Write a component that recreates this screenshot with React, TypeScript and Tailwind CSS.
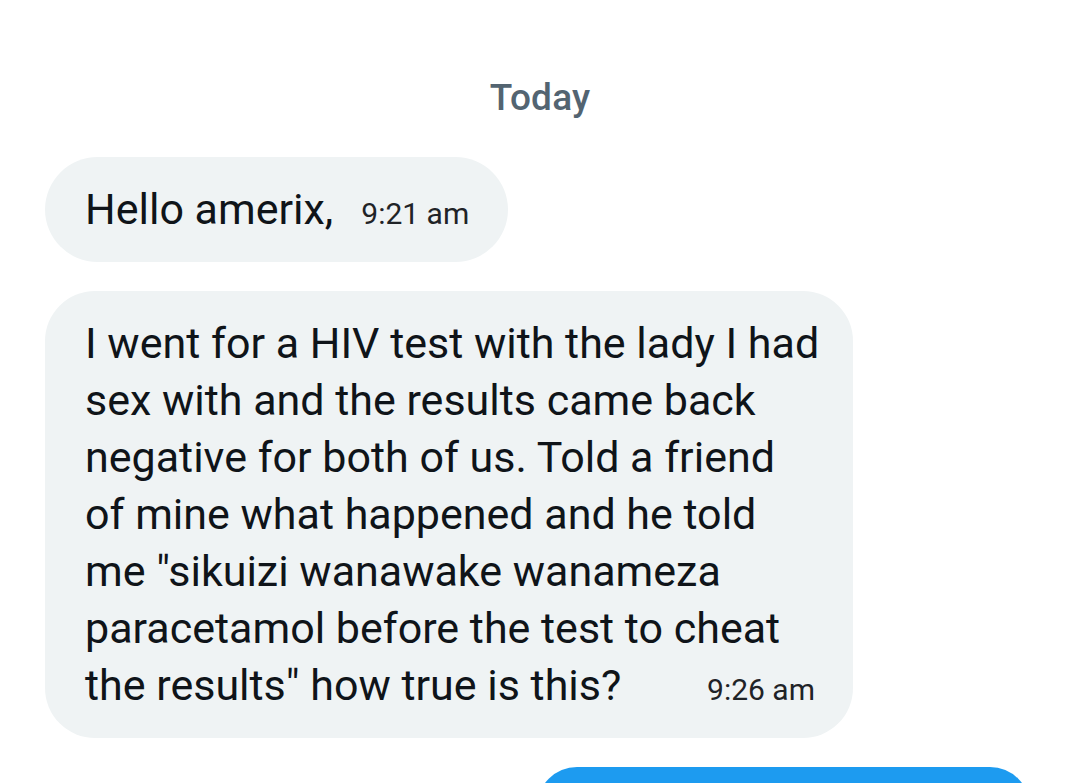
export default function App() {
  const lines = [
    "I went for a HIV test with the lady I had",
    "sex with and the results came back",
    "negative for both of us. Told a friend",
    "of mine what happened and he told",
    'me "sikuizi wanawake wanameza',
    "paracetamol before the test to cheat",
  ];

  return (
    <div
      className="w-[1080px] h-[783px] overflow-hidden bg-white text-[#0f1419]"
      style={{ fontFamily: "Roboto, 'Noto Sans', sans-serif" }}
    >
      {/* date divider */}
      <div className="pt-[76px] flex justify-center">
        <span className="text-[37px] leading-[44px] font-medium text-[#536471] tracking-[0.2px]">Today</span>
      </div>

      <div className="mt-[37px] pl-[45px] flex flex-col items-start gap-[29px]">
        {/* short bubble */}
        <div className="h-[105px] rounded-full bg-[#eff3f4] pl-[40px] pr-[39px] flex items-center">
          <span className="text-[43px] leading-[57px]">Hello amerix,</span>
          <span className="ml-[28px] mt-[8px] text-[30px] text-[#1f2327]">9:21 am</span>
        </div>

        {/* long bubble */}
        <div className="w-[808px] rounded-[50px] bg-[#eff3f4] pl-[40px] pr-[38px] pt-[24px] pb-[20px]">
          <div className="text-[43px] leading-[57px] whitespace-nowrap">
            {lines.map((l) => (
              <div key={l}>{l}</div>
            ))}
            <div className="flex items-baseline justify-between">
              <span>the results" how true is this?</span>
              <span className="text-[30px] text-[#1f2327]">9:26 am</span>
            </div>
          </div>
        </div>
      </div>

      {/* outgoing bubble, cut off */}
      <div className="mt-[29px] pl-[537px]">
        <div className="w-[493px] h-[80px] rounded-[50px] bg-[#1d9bf0]" />
      </div>
    </div>
  );
}
